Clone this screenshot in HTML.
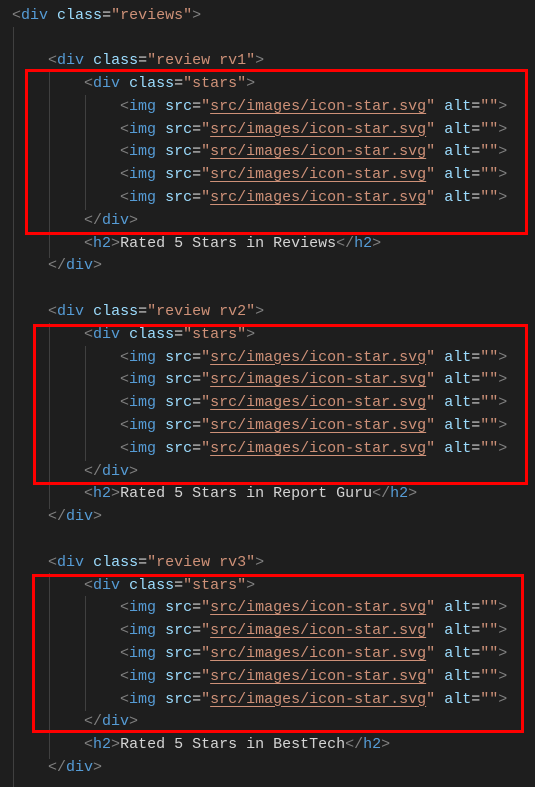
<!DOCTYPE html>
<html><head><meta charset="utf-8"><style>
body{margin:0;width:535px;height:787px;background:#1e1e1e;overflow:hidden;position:relative;font-family:"Liberation Mono",monospace;font-size:15px;}
.l{position:absolute;left:12px;height:23px;line-height:23px;white-space:pre;color:#d4d4d4;}
.b{color:#808080}.t{color:#569cd6}.a{color:#9cdcfe}.s{color:#ce9178}.u{text-decoration:underline;text-decoration-color:#ce9178;text-underline-offset:3px}
.g{position:absolute;width:1px;background:#404040}
.box{position:absolute;border:3px solid #ff0000;box-sizing:border-box}
</style></head><body>
<div class="g" style="left:13px;top:27px;height:760px"></div>
<div class="g" style="left:49px;top:72px;height:186px"></div>
<div class="g" style="left:85px;top:95px;height:115px"></div>
<div class="g" style="left:49px;top:323px;height:186px"></div>
<div class="g" style="left:85px;top:346px;height:115px"></div>
<div class="g" style="left:49px;top:573px;height:186px"></div>
<div class="g" style="left:85px;top:596px;height:115px"></div>
<div id="c"></div>
<div class="box" style="left:25px;top:69px;width:503px;height:166px"></div>
<div class="box" style="left:33px;top:324px;width:495px;height:161px"></div>
<div class="box" style="left:32px;top:574px;width:492px;height:159px"></div>
<script>
var L=[];
function o(n,ind,cls){return ' '.repeat(ind)+'<span class="b">&lt;</span><span class="t">div</span> <span class="a">class</span><span class="d">=</span><span class="s">"'+cls+'"</span><span class="b">&gt;</span>';}
function c(ind){return ' '.repeat(ind)+'<span class="b">&lt;/</span><span class="t">div</span><span class="b">&gt;</span>';}
var img='            <span class="b">&lt;</span><span class="t">img</span> <span class="a">src</span>=<span class="s">"<span class="u">src/images/icon-star.svg</span>"</span> <span class="a">alt</span>=<span class="s">""</span><span class="b">&gt;</span>';
function h(t){return '        <span class="b">&lt;</span><span class="t">h2</span><span class="b">&gt;</span>'+t+'<span class="b">&lt;/</span><span class="t">h2</span><span class="b">&gt;</span>';}
L.push(o(0,0,'reviews'));L.push('');
var names=['Reviews','Report Guru','BestTech'];
for(var i=0;i<3;i++){L.push(o(0,4,'review rv'+(i+1)));L.push(o(0,8,'stars'));for(var k=0;k<5;k++)L.push(img);L.push(c(8));L.push(h('Rated 5 Stars in '+names[i]));L.push(c(4));if(i<2)L.push('');}
var html='';for(var j=0;j<L.length;j++){html+='<div class="l" style="top:'+(3.6+j*22.8).toFixed(1)+'px">'+L[j]+'</div>';}
document.getElementById('c').innerHTML=html;
</script>
</body></html>
